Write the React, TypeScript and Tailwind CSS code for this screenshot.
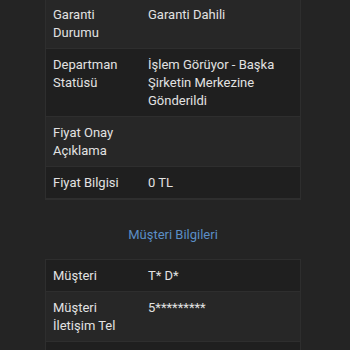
const servis = [
  { label: "Garanti Durumu", value: "Garanti Dahili" },
  { label: "Departman Statüsü", value: "İşlem Görüyor - Başka Şirketin Merkezine Gönderildi" },
  { label: "Fiyat Onay Açıklama", value: "" },
  { label: "Fiyat Bilgisi", value: "0 TL" },
];

const musteri = [
  { label: "Müşteri", value: "T* D*" },
  { label: "Müşteri İletişim Tel", value: "5*********" },
  { label: "", value: "" },
];

function InfoTable({ rows, startDark }: { rows: { label: string; value: string }[]; startDark: boolean }) {
  return (
    <div className="mx-auto w-[256px] border border-[#2e2e2e]">
      {rows.map((row, i) => {
        const dark = startDark ? i % 2 === 0 : i % 2 === 1;
        return (
          <div
            key={i}
            className={`flex min-h-[32px] border-b border-[#2e2e2e] py-[6.5px] ${dark ? "bg-[#1f1f1f]" : "bg-[#272727]"}`}
          >
            <div className="w-[95px] shrink-0 px-[7px]">{row.label}</div>
            <div className="flex-1 px-[7px]">{row.value}</div>
          </div>
        );
      })}
    </div>
  );
}

export default function App() {
  return (
    <div className="h-[350px] w-[350px] overflow-hidden bg-[#242424] pr-[4px] font-['Roboto',sans-serif] text-[13px] leading-[18px] text-[#e2e2e2]">
      <div className="mt-[-2px]">
        <InfoTable rows={servis} startDark={false} />
      </div>
      <h3 className="mt-[26px] mb-[15px] text-center text-[#5b8ec6]">Müşteri Bilgileri</h3>
      <InfoTable rows={musteri} startDark={true} />
    </div>
  );
}
